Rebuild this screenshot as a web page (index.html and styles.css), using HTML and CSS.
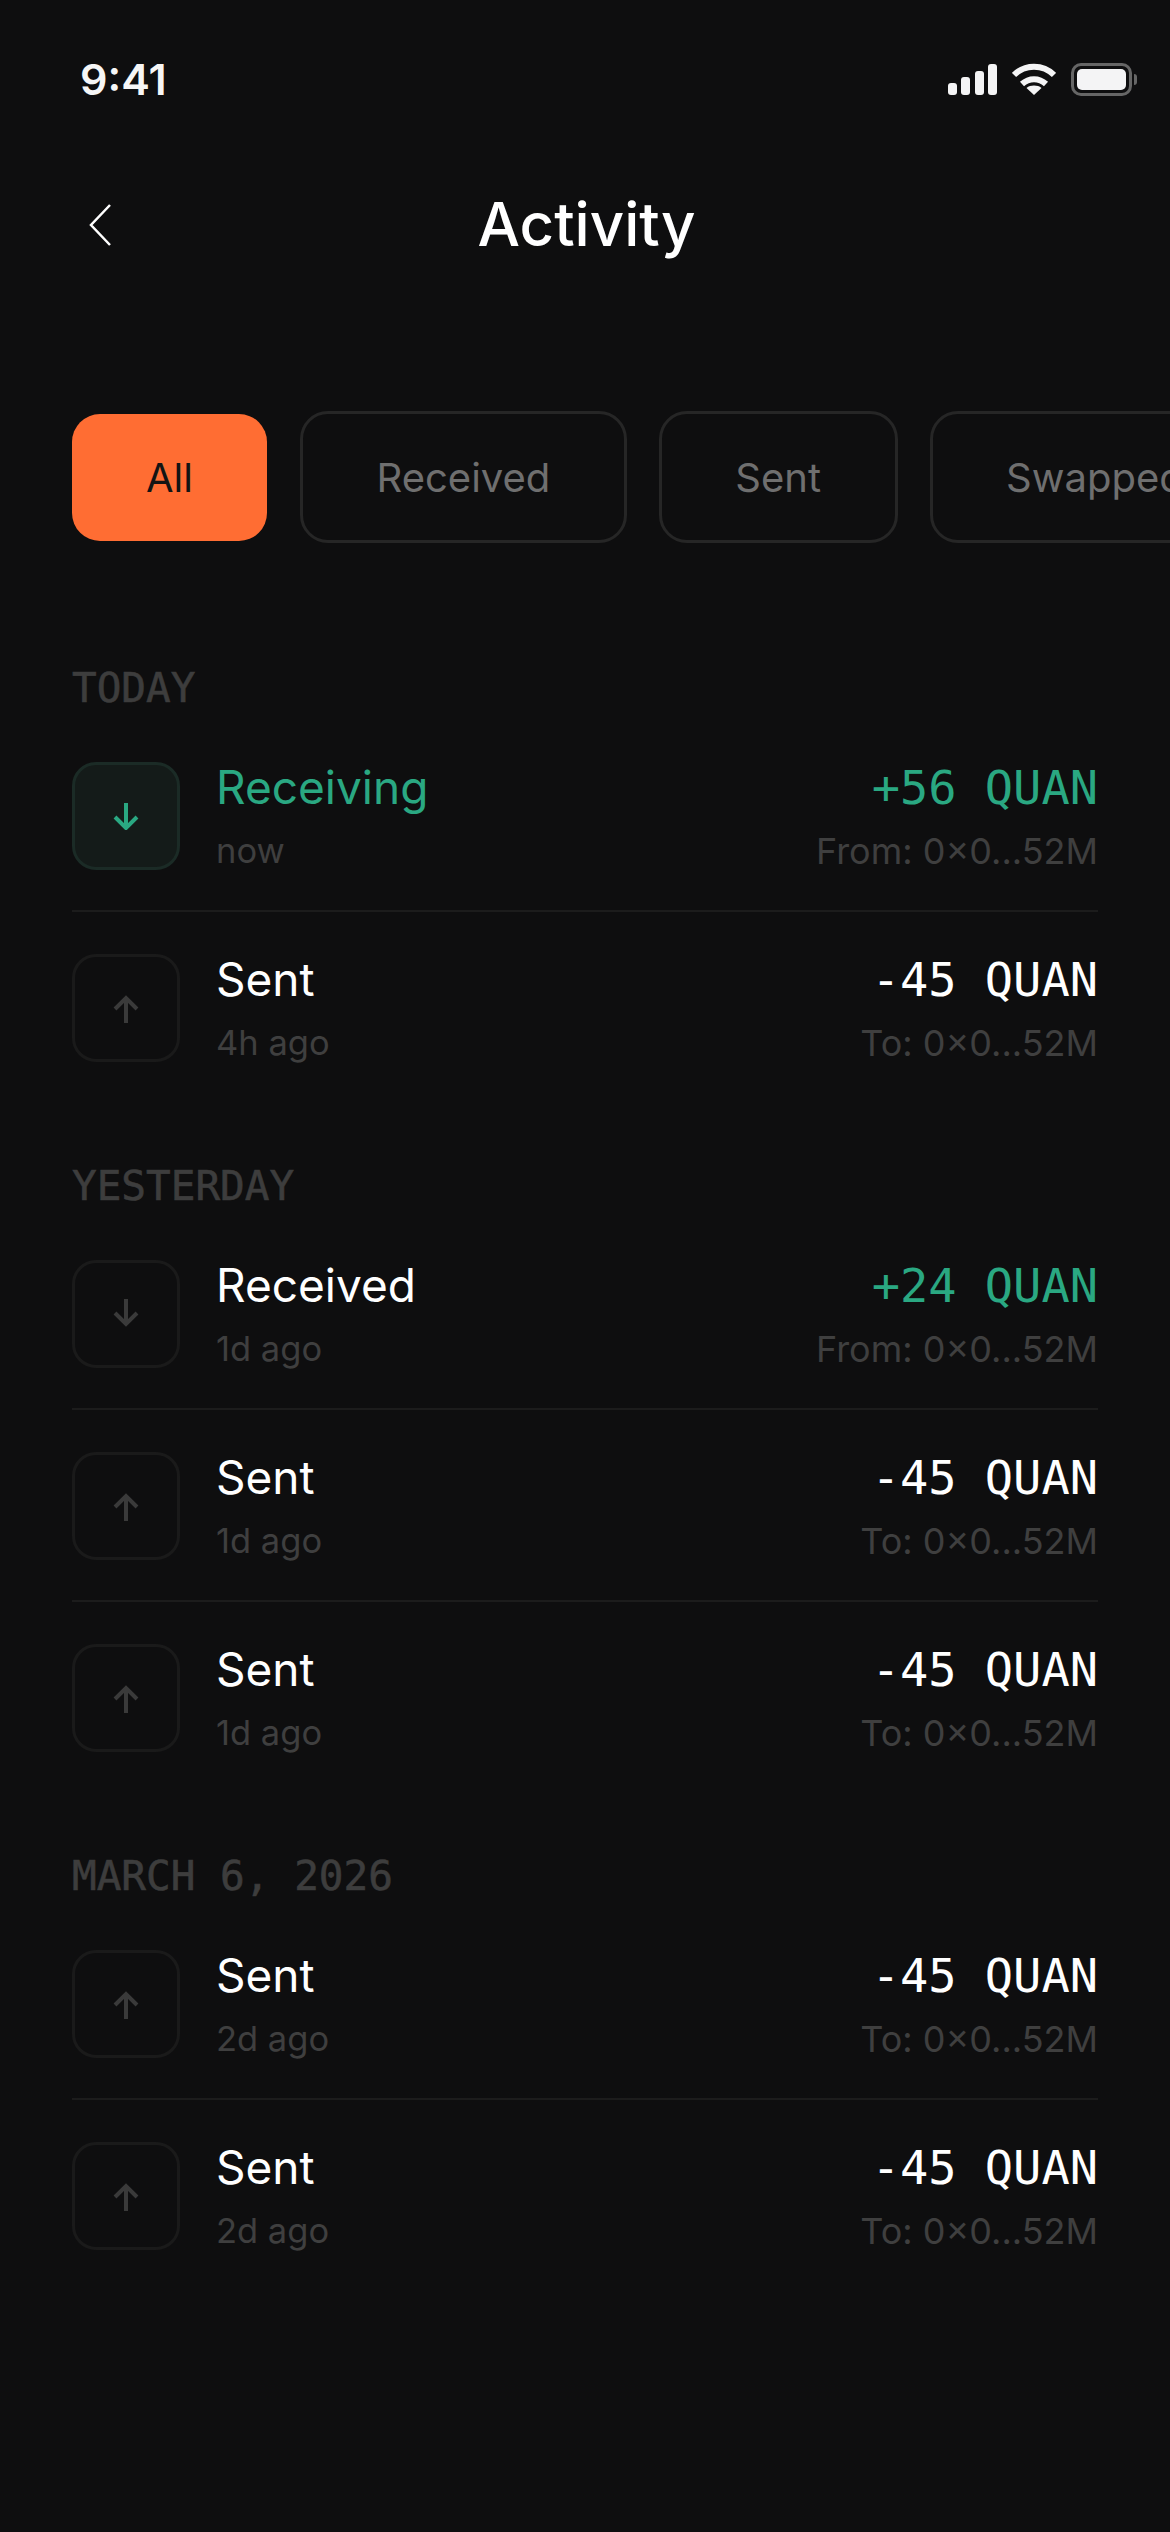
FILE: index.html
```
<!DOCTYPE html>
<html lang="en">
<head>
    <meta charset="UTF-8">
    <meta name="viewport" content="width=device-width, initial-scale=1.0">
    <title>Activity</title>
    <link rel="stylesheet" href="styles.css">
</head>
<body>
    <div class="screen">
        <div class="status-bar">
            <span class="status-time">9:41</span>
            <div class="status-icons">
                <svg width="49" height="31" viewBox="0 0 49 31" fill="#f4f4f5">
                    <rect x="0" y="19" width="9" height="12" rx="3"/>
                    <rect x="13" y="13" width="9" height="18" rx="3"/>
                    <rect x="27" y="7" width="9" height="24" rx="3"/>
                    <rect x="40" y="0" width="9" height="31" rx="3"/>
                </svg>
                <svg width="44" height="32" viewBox="0 0 44 32" fill="none" stroke="#f4f4f5" stroke-width="6">
                    <path d="M2 12C13 1 31 1 42 12"/>
                    <path d="M10 21C17 14.500 27 14.500 34 21"/>
                    <path d="M14.500 25C18.500 21.800 25.500 21.800 29.500 25L22 32Z" fill="#f4f4f5" stroke="none"/>
                </svg>
                <div class="battery">
                    <div class="battery-body"><div class="battery-fill"></div></div>
                    <div class="battery-nub"></div>
                </div>
            </div>
        </div>

        <div class="header">
            <button type="button" class="back-button">
                <svg width="22" height="42" viewBox="0 0 22 42" fill="none" stroke="#ffffff" stroke-width="2.500">
                    <path d="M21 1L2 21L21 41"/>
                </svg>
            </button>
            <h1 class="header-title">Activity</h1>
        </div>

        <div class="filters">
            <button type="button" class="filter filter-active">All</button>
            <button type="button" class="filter">Received</button>
            <button type="button" class="filter">Sent</button>
            <button type="button" class="filter">Swapped</button>
        </div>

        <section class="group">
            <h2 class="group-label">TODAY</h2>
            <div class="row">
                <div class="row-icon row-icon-live">
                    <svg width="26" height="28" viewBox="0 0 26 28" fill="none" stroke="#2aa882" stroke-width="4"><path d="M13 1V26M2 15L13 26L24 15"/></svg>
                </div>
                <div class="row-main">
                    <div class="row-title row-title-green">Receiving</div>
                    <div class="row-sub">now</div>
                </div>
                <div class="row-side">
                    <div class="row-amount row-amount-green">+56 QUAN</div>
                    <div class="row-address">From: 0×0...52M</div>
                </div>
            </div>
            <div class="row">
                <div class="row-icon">
                    <svg width="26" height="32" viewBox="0 0 26 32" fill="none" stroke="#3a3a3a" stroke-width="4"><path d="M13 31V6M2 17L13 6L24 17"/></svg>
                </div>
                <div class="row-main">
                    <div class="row-title">Sent</div>
                    <div class="row-sub">4h ago</div>
                </div>
                <div class="row-side">
                    <div class="row-amount">-45 QUAN</div>
                    <div class="row-address">To: 0×0...52M</div>
                </div>
            </div>
        </section>

        <section class="group">
            <h2 class="group-label">YESTERDAY</h2>
            <div class="row">
                <div class="row-icon">
                    <svg width="26" height="32" viewBox="0 0 26 32" fill="none" stroke="#3a3a3a" stroke-width="4"><path d="M13 1V26M2 15L13 26L24 15"/></svg>
                </div>
                <div class="row-main">
                    <div class="row-title">Received</div>
                    <div class="row-sub">1d ago</div>
                </div>
                <div class="row-side">
                    <div class="row-amount row-amount-green">+24 QUAN</div>
                    <div class="row-address">From: 0×0...52M</div>
                </div>
            </div>
            <div class="row">
                <div class="row-icon">
                    <svg width="26" height="32" viewBox="0 0 26 32" fill="none" stroke="#3a3a3a" stroke-width="4"><path d="M13 31V6M2 17L13 6L24 17"/></svg>
                </div>
                <div class="row-main">
                    <div class="row-title">Sent</div>
                    <div class="row-sub">1d ago</div>
                </div>
                <div class="row-side">
                    <div class="row-amount">-45 QUAN</div>
                    <div class="row-address">To: 0×0...52M</div>
                </div>
            </div>
            <div class="row">
                <div class="row-icon">
                    <svg width="26" height="32" viewBox="0 0 26 32" fill="none" stroke="#3a3a3a" stroke-width="4"><path d="M13 31V6M2 17L13 6L24 17"/></svg>
                </div>
                <div class="row-main">
                    <div class="row-title">Sent</div>
                    <div class="row-sub">1d ago</div>
                </div>
                <div class="row-side">
                    <div class="row-amount">-45 QUAN</div>
                    <div class="row-address">To: 0×0...52M</div>
                </div>
            </div>
        </section>

        <section class="group">
            <h2 class="group-label">MARCH 6, 2026</h2>
            <div class="row">
                <div class="row-icon">
                    <svg width="26" height="32" viewBox="0 0 26 32" fill="none" stroke="#3a3a3a" stroke-width="4"><path d="M13 31V6M2 17L13 6L24 17"/></svg>
                </div>
                <div class="row-main">
                    <div class="row-title">Sent</div>
                    <div class="row-sub">2d ago</div>
                </div>
                <div class="row-side">
                    <div class="row-amount">-45 QUAN</div>
                    <div class="row-address">To: 0×0...52M</div>
                </div>
            </div>
            <div class="row">
                <div class="row-icon">
                    <svg width="26" height="32" viewBox="0 0 26 32" fill="none" stroke="#3a3a3a" stroke-width="4"><path d="M13 31V6M2 17L13 6L24 17"/></svg>
                </div>
                <div class="row-main">
                    <div class="row-title">Sent</div>
                    <div class="row-sub">2d ago</div>
                </div>
                <div class="row-side">
                    <div class="row-amount">-45 QUAN</div>
                    <div class="row-address">To: 0×0...52M</div>
                </div>
            </div>
        </section>
    </div>
</body>
</html>
```

FILE: styles.css
```
body {
    margin: 0;
    background: #0e0e0f;
    font-family: Inter, "Liberation Sans", sans-serif;
    color: #ffffff;
}
.screen {
    width: 1170px;
    height: 2532px;
    overflow: hidden;
}
.status-bar {
    display: flex;
    align-items: center;
    justify-content: space-between;
    height: 32px;
    padding: 63px 33px 0 80px;
}
.status-time {
    font-size: 43px;
    font-weight: 600;
    color: #f6f6f6;
}
.status-icons {
    display: flex;
    align-items: center;
    gap: 15px;
}
.battery {
    display: flex;
    align-items: center;
    gap: 2px;
}
.battery-body {
    width: 61px;
    height: 33px;
    box-sizing: border-box;
    padding: 3px;
    border: 3px solid #666666;
    border-radius: 10px;
}
.battery-fill {
    height: 100%;
    background: #f4f4f5;
    border-radius: 5px;
}
.battery-nub {
    width: 3px;
    height: 11px;
    background: #666666;
    border-radius: 0 3px 3px 0;
}
.header {
    display: flex;
    align-items: center;
    justify-content: center;
    position: relative;
    height: 80px;
    margin-top: 89px;
}
.back-button {
    position: absolute;
    left: 89px;
    top: 20px;
    padding: 0;
    background: none;
    border: none;
    line-height: 0;
}
.header-title {
    margin: 0;
    padding-left: 3px;
    font-size: 60px;
    font-weight: 500;
}
.filters {
    display: flex;
    align-items: center;
    gap: 32px;
    margin-top: 147px;
    padding: 0 0 21px 72px;
}
.filter {
    flex-shrink: 0;
    height: 132px;
    padding: 0 73.500px;
    background: transparent;
    border: 3px solid #262626;
    border-radius: 28px;
    font-family: inherit;
    font-size: 40px;
    color: #6f6f6f;
}
.filter-active {
    height: 127px;
    margin-right: 1px;
    padding: 0 74px;
    border: none;
    background: #ff6d33;
    color: #141414;
}
.group {
    margin-top: 100px;
    padding: 0 72px;
}
.group-label {
    margin: 0;
    font-family: "DejaVu Sans Mono", monospace;
    font-size: 41px;
    font-weight: 400;
    line-height: 48px;
    color: #3d3d3d;
    -webkit-text-stroke: 0.6px #3d3d3d;
}
.row {
    display: flex;
    align-items: flex-start;
    padding: 42px 0 40px;
    border-top: 2px solid #1c1c1c;
}
.group-label + .row {
    border-top: none;
    padding-top: 50px;
}
.row:last-child {
    padding-bottom: 0;
}
.row-icon {
    display: flex;
    align-items: center;
    justify-content: center;
    flex-shrink: 0;
    box-sizing: border-box;
    width: 108px;
    height: 108px;
    border: 3px solid #1a1a1a;
    border-radius: 24px;
}
.row-icon-live {
    background: #141b19;
    border-color: #1b2b26;
}
.row-main {
    flex: 1;
    margin-left: 36px;
}
.row-title {
    font-size: 46px;
    line-height: 50px;
    color: #ffffff;
}
.row-title-green {
    color: #2aa882;
}
.row-sub {
    margin-top: 22px;
    font-size: 34.500px;
    line-height: 34px;
    color: #3f3f3f;
}
.row-side {
    text-align: right;
}
.row-amount {
    font-family: "DejaVu Sans Mono", monospace;
    font-size: 47px;
    line-height: 52px;
    color: #ffffff;
}
.row-amount-green {
    color: #2aa882;
}
.row-address {
    margin-top: 20px;
    font-size: 36px;
    line-height: 34px;
    color: #3f3f3f;
}
```
